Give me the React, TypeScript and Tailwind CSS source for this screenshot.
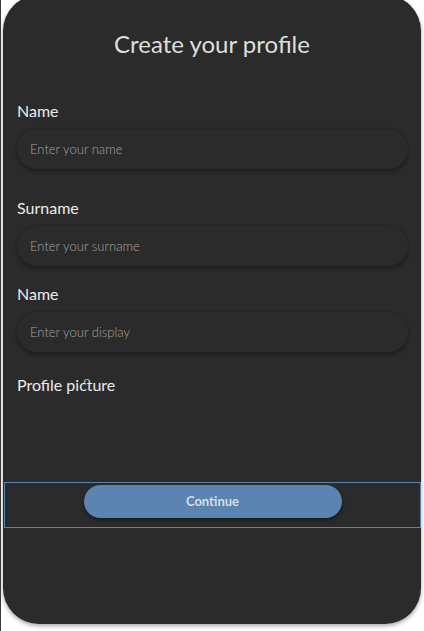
import React from "react";

const font = "font-['Lato','Noto_Sans',sans-serif]";

function Field({ label, placeholder, labelMt }: { label: string; placeholder: string; labelMt: string }) {
  return (
    <div className={`flex flex-col ${labelMt}`}>
      <div className="ml-[14px] text-[16px] leading-[20px] text-[#ececec]">{label}</div>
      <div className="ml-[14px] mr-[13px] mt-[8px] flex h-[40px] items-center rounded-[20px] bg-[#2b2b2b] pl-[13px] shadow-[0_3px_4px_rgba(0,0,0,0.32),0_-1px_2px_rgba(0,0,0,0.12)]">
        <span className="text-[13px] font-light leading-[16px] text-[#a3a3a3]">{placeholder}</span>
      </div>
    </div>
  );
}

export default function App() {
  return (
    <div className={`flex h-[631px] w-[424px] overflow-hidden border-l border-[#3a3a3a] bg-white ${font}`}>
      <div className="ml-[2px] mt-[-5px] flex h-[629px] w-[418px] flex-col rounded-[36px] bg-[#2b2b2b] shadow-[0_2px_4px_rgba(0,0,0,0.35)]">
        <h1 className="mt-[33px] text-center text-[24px] leading-[32px] text-[#dedede]">Create your profile</h1>
        <Field label="Name" placeholder="Enter your name" labelMt="mt-[41px]" />
        <Field label="Surname" placeholder="Enter your surname" labelMt="mt-[29px]" />
        <Field label="Name" placeholder="Enter your display" labelMt="mt-[18px]" />
        <div className="ml-[14px] mt-[23px] text-[16px] leading-[20px] text-[#ececec] [font-variant-ligatures:discretionary-ligatures]">
          Profile picture
        </div>
        <div className="ml-[1px] mt-[87px] flex h-[46px] items-start justify-center border border-[#5a82ae] pt-[2px]">
          <button className="flex h-[33px] w-[258px] items-center justify-center rounded-full bg-[#5b84b1] text-[13px] font-bold text-[#d6dde6] shadow-[0_2px_4px_rgba(0,0,0,0.4)]">
            Continue
          </button>
        </div>
      </div>
    </div>
  );
}
